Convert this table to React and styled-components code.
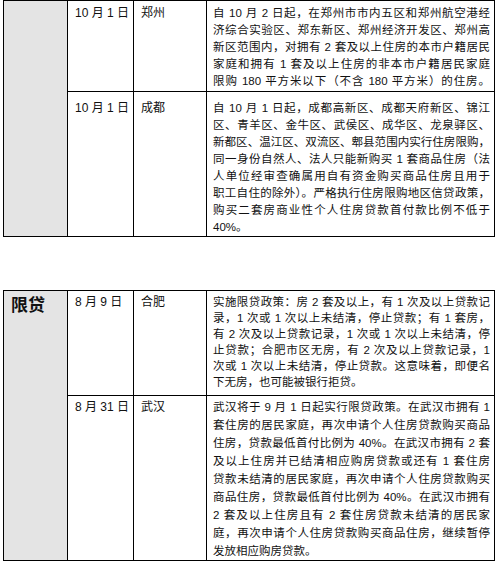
import React from "react";
import styled, { createGlobalStyle } from "styled-components";

const GlobalStyle = createGlobalStyle`
  body {
    margin: 0;
    background: #fff;
    color: #111;
    font-family: "Liberation Sans", "Noto Sans CJK SC", sans-serif;
  }
`;

const Page = styled.div`
  width: 500px;
  padding-left: 3px;
  box-sizing: border-box;
  display: flex;
  flex-direction: column;
  gap: 53px;
`;

const Table = styled.table`
  width: 491px;
  table-layout: fixed;
  border-collapse: collapse;
  td {
    border: 1px solid #000;
    vertical-align: top;
  }
`;

const Col = styled.col`
  width: ${(p) => p.$w}px;
`;

const Category = styled.td`
  background: #e4e4e4;
  padding: 4px 7px;
  font-size: 17px;
  font-weight: 700;
  line-height: 22px;
`;

const Cell = styled.td`
  padding: ${(p) => p.$pad}px 6px ${(p) => p.$padBottom}px 7px;
  font-size: 12px;
  line-height: ${(p) => p.$lh}px;
  white-space: nowrap;
`;

const TextCell = styled(Cell)`
  padding-left: 6px;
  padding-right: 4px;
  font-size: 11.5px;
`;

const Line = styled.span`
  display: block;
  white-space: nowrap;
  text-align: justify;
  text-align-last: ${(p) => (p.$last ? "left" : "justify")};
`;

const columns = [64, 66, 73, 288];

const tables = [
  {
    label: "",
    rows: [
      {
        date: "10 月 1 日",
        city: "郑州",
        pad: 3.5,
        padBottom: 0.5,
        lh: 17.2,
        fillLast: true,
        lines: [
          "自 10 月 2 日起，在郑州市市内五区和郑州航空港经",
          "济综合实验区、郑东新区、郑州经济开发区、郑州高",
          "新区范围内，对拥有 2 套及以上住房的本市户籍居民",
          "家庭和拥有 1 套及以上住房的非本市户籍居民家庭",
          "限购 180 平方米以下（不含 180 平方米）的住房。",
        ],
      },
      {
        date: "10 月 1 日",
        city: "成都",
        pad: 8,
        padBottom: 0,
        lh: 17,
        lines: [
          "自 10 月 1 日起，成都高新区、成都天府新区、锦江",
          "区、青羊区、金牛区、武侯区、成华区、龙泉驿区、",
          "新都区、温江区、双流区、郫县范围内实行住房限购，",
          "同一身份自然人、法人只能新购买 1 套商品住房（法",
          "人单位经审查确属用自有资金购买商品住房且用于",
          "职工自住的除外）。严格执行住房限购地区信贷政策，",
          "购买二套房商业性个人住房贷款首付款比例不低于",
          "40%。",
        ],
      },
    ],
  },
  {
    label: "限贷",
    rows: [
      {
        date: "8 月 9 日",
        city: "合肥",
        pad: 3,
        padBottom: 5,
        lh: 16,
        lines: [
          "实施限贷政策：房 2 套及以上，有 1 次及以上贷款记",
          "录，1 次或 1 次以上未结清，停止贷款；有 1 套房，",
          "有 2 次及以上贷款记录，1 次或 1 次以上未结清，停",
          "止贷款；合肥市区无房，有 2 次及以上贷款记录，1",
          "次或 1 次以上未结清，停止贷款。这意味着，即便名",
          "下无房，也可能被银行拒贷。",
        ],
      },
      {
        date: "8 月 31 日",
        city: "武汉",
        pad: 2,
        padBottom: 0,
        lh: 18,
        lines: [
          "武汉将于 9 月 1 日起实行限贷政策。在武汉市拥有 1",
          "套住房的居民家庭，再次申请个人住房贷款购买商品",
          "住房，贷款最低首付比例为 40%。在武汉市拥有 2 套",
          "及以上住房并已结清相应购房贷款或还有 1 套住房",
          "贷款未结清的居民家庭，再次申请个人住房贷款购买",
          "商品住房，贷款最低首付比例为 40%。在武汉市拥有",
          "2 套及以上住房且有 2 套住房贷款未结清的居民家",
          "庭，再次申请个人住房贷款购买商品住房，继续暂停",
          "发放相应购房贷款。",
        ],
      },
    ],
  },
];

function PolicyTable({ label, rows }) {
  return (
    <Table>
      <colgroup>
        {columns.map((w, i) => (
          <Col key={i} $w={w} />
        ))}
      </colgroup>
      <tbody>
        {rows.map((row, i) => (
          <tr key={i}>
            {i === 0 && <Category rowSpan={rows.length}>{label}</Category>}
            <Cell $pad={row.pad} $padBottom={row.padBottom} $lh={row.lh}>
              {row.date}
            </Cell>
            <Cell $pad={row.pad} $padBottom={row.padBottom} $lh={row.lh}>
              {row.city}
            </Cell>
            <TextCell $pad={row.pad} $padBottom={row.padBottom} $lh={row.lh}>
              {row.lines.map((line, j) => (
                <Line
                  key={j}
                  $last={j === row.lines.length - 1 && !row.fillLast}
                >
                  {line}
                </Line>
              ))}
            </TextCell>
          </tr>
        ))}
      </tbody>
    </Table>
  );
}

export default function App() {
  return (
    <>
      <GlobalStyle />
      <Page>
        {tables.map((t, i) => (
          <PolicyTable key={i} label={t.label} rows={t.rows} />
        ))}
      </Page>
    </>
  );
}
